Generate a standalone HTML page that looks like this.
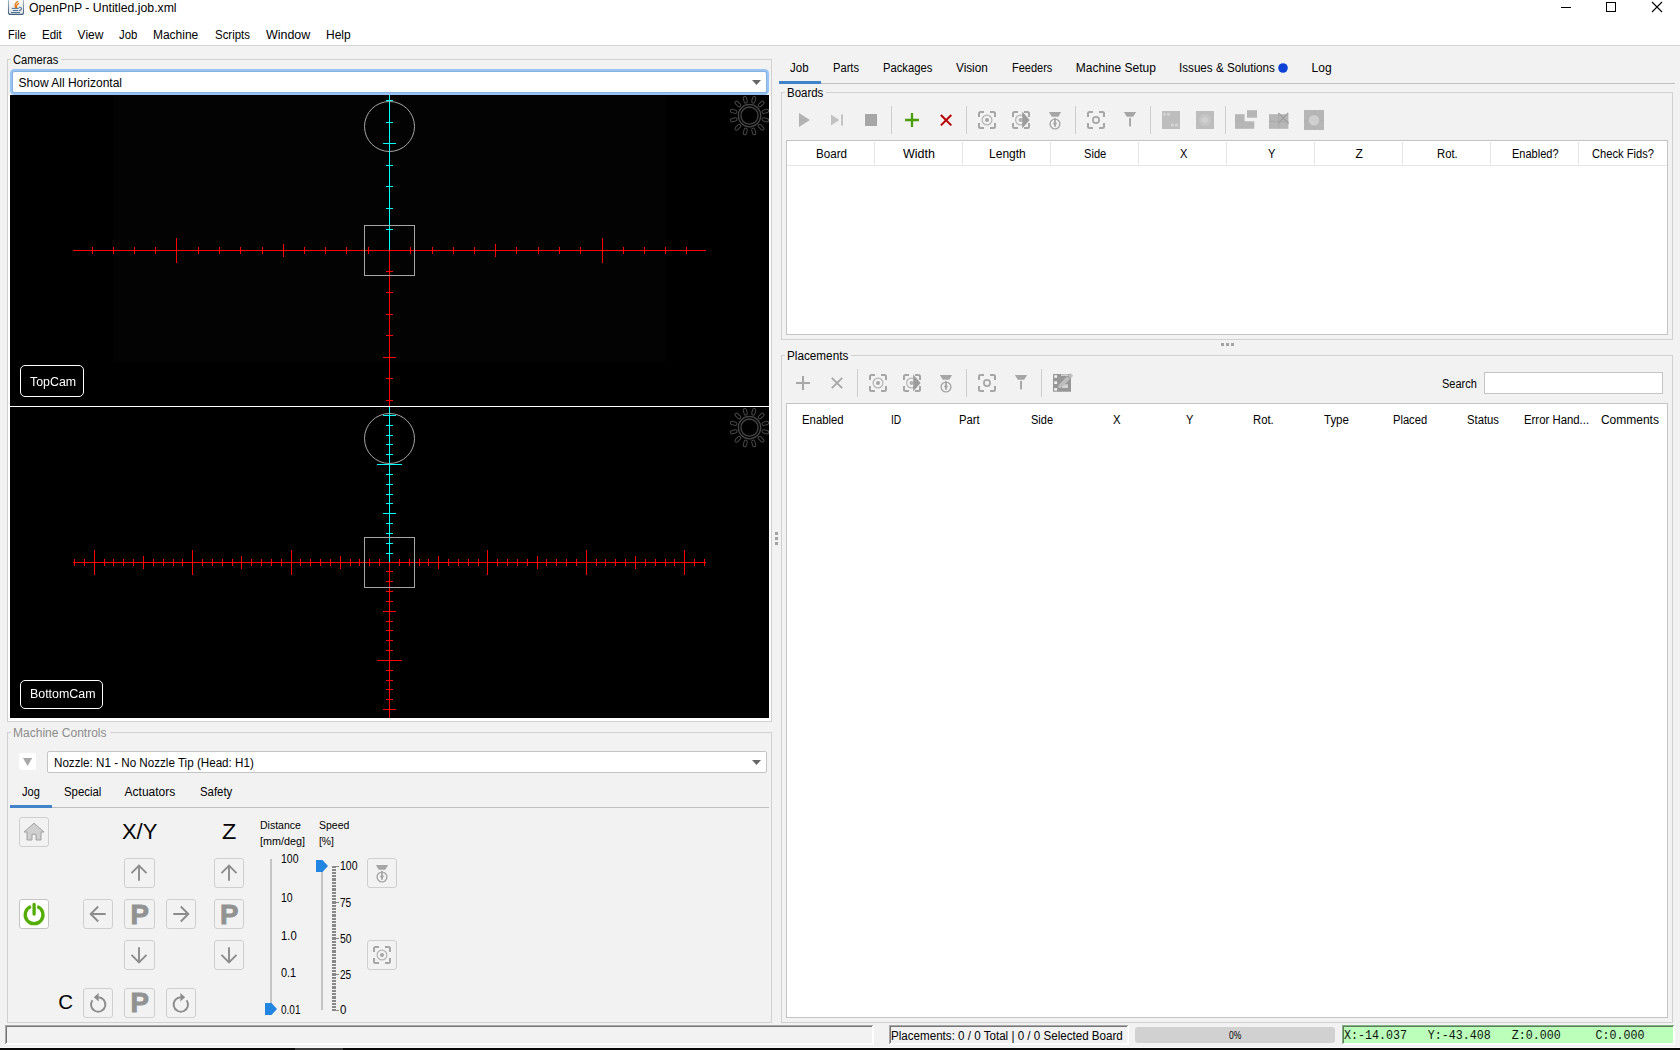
<!DOCTYPE html>
<html lang="en"><head><meta charset="utf-8"><title>OpenPnP - Untitled.job.xml</title>
<style>
html,body{margin:0;padding:0;}
body{width:1680px;height:1050px;overflow:hidden;background:#f2f2f2;position:relative;font-family:'Liberation Sans', sans-serif;}
.a{position:absolute;display:block;}
.t{position:absolute;white-space:pre;transform-origin:0 0;}
</style></head>
<body>
<div class="a" style="left:0px;top:0px;width:1680px;height:45px;background:#ffffff;"></div>
<div class="a" style="left:0px;top:45px;width:1680px;height:1px;background:#d4d4d4;"></div>
<svg class="a" style="left:7px;top:0px;" width="18" height="16" viewBox="0 0 18 16"><defs><linearGradient id="jg" x1="0" y1="0" x2="0" y2="1"><stop offset="0" stop-color="#ffffff"/><stop offset="1" stop-color="#e4e4e4"/></linearGradient><linearGradient id="js" x1="0" y1="0" x2="0" y2="1"><stop offset="0" stop-color="#b9c9da"/><stop offset="1" stop-color="#3f607f"/></linearGradient></defs>
<rect x="1.5" y="-2" width="15" height="16.4" rx="2" fill="url(#jg)" stroke="url(#js)" stroke-width="1.1"/>
<path d="M10.6 1.6C8.6 3 7.2 4.6 8.5 7.6M11.6 3.4C9.9 4.5 8.9 5.8 9.6 7.4" fill="none" stroke="#e8750a" stroke-width="1.2" stroke-linecap="round"/>
<path d="M5.2 8.4H11.4M6.2 10.5H10.6M4.4 12.5H12.6" fill="none" stroke="#4d7299" stroke-width="1" stroke-linecap="round"/>
<path d="M12.2 7.3C15.2 7.4 15.3 10.2 12.2 10.6" fill="none" stroke="#4d7299" stroke-width="1.1" stroke-linecap="round"/></svg>
<span class="t" style="left:28.60px;top:-2.16px;font:normal 12px/20px 'Liberation Sans', sans-serif;color:#000;transform:scaleX(1.0213);">OpenPnP - Untitled.job.xml</span>
<div class="a" style="left:1561px;top:7px;width:10px;height:1px;background:#000;"></div>
<div class="a" style="left:1606px;top:2px;width:10px;height:10px;border:1px solid #000;box-sizing:border-box;"></div>
<svg class="a" style="left:1651px;top:1px;" width="12" height="12" viewBox="0 0 12 12"><path d="M1 1L11 11M11 1L1 11" stroke="#000" stroke-width="1.1" fill="none"/></svg>
<span class="t" style="left:8.10px;top:24.84px;font:normal 12px/20px 'Liberation Sans', sans-serif;color:#000;transform:scaleX(0.9202);">File</span>
<span class="t" style="left:42.10px;top:24.84px;font:normal 12px/20px 'Liberation Sans', sans-serif;color:#000;transform:scaleX(0.9571);">Edit</span>
<span class="t" style="left:77.60px;top:24.84px;font:normal 12px/20px 'Liberation Sans', sans-serif;color:#000;">View</span>
<span class="t" style="left:118.60px;top:24.84px;font:normal 12px/20px 'Liberation Sans', sans-serif;color:#000;transform:scaleX(0.9453);">Job</span>
<span class="t" style="left:152.90px;top:24.84px;font:normal 12px/20px 'Liberation Sans', sans-serif;color:#000;">Machine</span>
<span class="t" style="left:214.90px;top:24.84px;font:normal 12px/20px 'Liberation Sans', sans-serif;color:#000;transform:scaleX(0.9540);">Scripts</span>
<span class="t" style="left:265.60px;top:24.84px;font:normal 12px/20px 'Liberation Sans', sans-serif;color:#000;transform:scaleX(1.0378);">Window</span>
<span class="t" style="left:326.00px;top:24.84px;font:normal 12px/20px 'Liberation Sans', sans-serif;color:#000;">Help</span>
<div class="a" style="left:7px;top:59px;width:765px;height:663px;border:1px solid #d1d1d1;box-sizing:border-box;"></div>
<div class="a" style="left:11px;top:59px;width:50px;height:1px;background:#f2f2f2;"></div>
<span class="t" style="left:13.10px;top:49.84px;font:normal 12px/20px 'Liberation Sans', sans-serif;color:#000;transform:scaleX(0.9304);">Cameras</span>
<div class="a" style="left:10px;top:69px;width:759px;height:26px;background:#98c4f5;border-radius:4.5px;"></div>
<div class="a" style="left:12px;top:71px;width:755px;height:22px;background:#86b1de;border-radius:2.5px;"></div>
<div class="a" style="left:13px;top:72px;width:753px;height:20px;background:#ffffff;border-radius:1.5px;"></div>
<span class="t" style="left:18.60px;top:72.84px;font:normal 12px/20px 'Liberation Sans', sans-serif;color:#000;">Show All Horizontal</span>
<svg class="a" style="left:752px;top:80px;" width="9" height="5" viewBox="0 0 9 5"><path d="M0 0H9L4.5 5Z" fill="#666"/></svg>
<div class="a" style="left:8px;top:95px;width:763px;height:626px;background:#fff;"></div>
<div class="a" style="left:10px;top:95px;width:759px;height:623px;background:#000;"></div>
<div class="a" style="left:114px;top:95px;width:552px;height:267px;background:#030303;"></div>
<div class="a" style="left:10px;top:406px;width:759px;height:1px;background:#fff;"></div>
<svg class="a" style="left:0px;top:0px;pointer-events:none;" width="769" height="730" viewBox="0 0 769 730"><rect x="73" y="250.0" width="633" height="1" fill="#ff0000"/><rect x="389.0" y="95" width="1" height="155.5" fill="#00ffff"/><rect x="389.0" y="250.5" width="1" height="155.5" fill="#ff0000"/><rect x="368" y="247.0" width="1" height="7.0" fill="#ff0000"/><rect x="410" y="247.0" width="1" height="7.0" fill="#ff0000"/><rect x="346" y="247.0" width="1" height="7.0" fill="#ff0000"/><rect x="432" y="247.0" width="1" height="7.0" fill="#ff0000"/><rect x="325" y="247.0" width="1" height="7.0" fill="#ff0000"/><rect x="453" y="247.0" width="1" height="7.0" fill="#ff0000"/><rect x="304" y="247.0" width="1" height="7.0" fill="#ff0000"/><rect x="474" y="247.0" width="1" height="7.0" fill="#ff0000"/><rect x="283" y="244.0" width="1" height="13.0" fill="#ff0000"/><rect x="495" y="244.0" width="1" height="13.0" fill="#ff0000"/><rect x="262" y="247.0" width="1" height="7.0" fill="#ff0000"/><rect x="516" y="247.0" width="1" height="7.0" fill="#ff0000"/><rect x="240" y="247.0" width="1" height="7.0" fill="#ff0000"/><rect x="538" y="247.0" width="1" height="7.0" fill="#ff0000"/><rect x="219" y="247.0" width="1" height="7.0" fill="#ff0000"/><rect x="559" y="247.0" width="1" height="7.0" fill="#ff0000"/><rect x="198" y="247.0" width="1" height="7.0" fill="#ff0000"/><rect x="580" y="247.0" width="1" height="7.0" fill="#ff0000"/><rect x="176" y="238.0" width="1" height="25.0" fill="#ff0000"/><rect x="602" y="238.0" width="1" height="25.0" fill="#ff0000"/><rect x="155" y="247.0" width="1" height="7.0" fill="#ff0000"/><rect x="623" y="247.0" width="1" height="7.0" fill="#ff0000"/><rect x="134" y="247.0" width="1" height="7.0" fill="#ff0000"/><rect x="644" y="247.0" width="1" height="7.0" fill="#ff0000"/><rect x="113" y="247.0" width="1" height="7.0" fill="#ff0000"/><rect x="665" y="247.0" width="1" height="7.0" fill="#ff0000"/><rect x="92" y="247.0" width="1" height="7.0" fill="#ff0000"/><rect x="686" y="247.0" width="1" height="7.0" fill="#ff0000"/><rect x="386.0" y="229" width="7.0" height="1" fill="#00ffff"/><rect x="386.0" y="208" width="7.0" height="1" fill="#00ffff"/><rect x="386.0" y="186" width="7.0" height="1" fill="#00ffff"/><rect x="386.0" y="165" width="7.0" height="1" fill="#00ffff"/><rect x="383.0" y="143" width="13.0" height="1" fill="#00ffff"/><rect x="386.0" y="122" width="7.0" height="1" fill="#00ffff"/><rect x="386.0" y="100" width="7.0" height="1" fill="#00ffff"/><rect x="386.0" y="271" width="7.0" height="1" fill="#ff0000"/><rect x="386.0" y="292" width="7.0" height="1" fill="#ff0000"/><rect x="386.0" y="314" width="7.0" height="1" fill="#ff0000"/><rect x="386.0" y="335" width="7.0" height="1" fill="#ff0000"/><rect x="383.0" y="357" width="13.0" height="1" fill="#ff0000"/><rect x="386.0" y="378" width="7.0" height="1" fill="#ff0000"/><rect x="386.0" y="400" width="7.0" height="1" fill="#ff0000"/><rect x="364.5" y="225.5" width="50" height="50" fill="none" stroke="#a6a6a6" stroke-width="1"/><circle cx="389.5" cy="126.5" r="25" fill="none" stroke="#a6a6a6" stroke-width="1"/><rect x="73" y="562.0" width="633" height="1" fill="#ff0000"/><rect x="389.0" y="407" width="1" height="155.5" fill="#00ffff"/><rect x="389.0" y="562.5" width="1" height="155.5" fill="#ff0000"/><rect x="379" y="559.0" width="1" height="7.0" fill="#ff0000"/><rect x="399" y="559.0" width="1" height="7.0" fill="#ff0000"/><rect x="369" y="559.0" width="1" height="7.0" fill="#ff0000"/><rect x="409" y="559.0" width="1" height="7.0" fill="#ff0000"/><rect x="359" y="559.0" width="1" height="7.0" fill="#ff0000"/><rect x="419" y="559.0" width="1" height="7.0" fill="#ff0000"/><rect x="350" y="559.0" width="1" height="7.0" fill="#ff0000"/><rect x="428" y="559.0" width="1" height="7.0" fill="#ff0000"/><rect x="340" y="556.0" width="1" height="13.0" fill="#ff0000"/><rect x="438" y="556.0" width="1" height="13.0" fill="#ff0000"/><rect x="330" y="559.0" width="1" height="7.0" fill="#ff0000"/><rect x="448" y="559.0" width="1" height="7.0" fill="#ff0000"/><rect x="320" y="559.0" width="1" height="7.0" fill="#ff0000"/><rect x="458" y="559.0" width="1" height="7.0" fill="#ff0000"/><rect x="310" y="559.0" width="1" height="7.0" fill="#ff0000"/><rect x="468" y="559.0" width="1" height="7.0" fill="#ff0000"/><rect x="300" y="559.0" width="1" height="7.0" fill="#ff0000"/><rect x="478" y="559.0" width="1" height="7.0" fill="#ff0000"/><rect x="291" y="550.0" width="1" height="25.0" fill="#ff0000"/><rect x="487" y="550.0" width="1" height="25.0" fill="#ff0000"/><rect x="281" y="559.0" width="1" height="7.0" fill="#ff0000"/><rect x="497" y="559.0" width="1" height="7.0" fill="#ff0000"/><rect x="271" y="559.0" width="1" height="7.0" fill="#ff0000"/><rect x="507" y="559.0" width="1" height="7.0" fill="#ff0000"/><rect x="261" y="559.0" width="1" height="7.0" fill="#ff0000"/><rect x="517" y="559.0" width="1" height="7.0" fill="#ff0000"/><rect x="251" y="559.0" width="1" height="7.0" fill="#ff0000"/><rect x="527" y="559.0" width="1" height="7.0" fill="#ff0000"/><rect x="241" y="556.0" width="1" height="13.0" fill="#ff0000"/><rect x="537" y="556.0" width="1" height="13.0" fill="#ff0000"/><rect x="232" y="559.0" width="1" height="7.0" fill="#ff0000"/><rect x="546" y="559.0" width="1" height="7.0" fill="#ff0000"/><rect x="222" y="559.0" width="1" height="7.0" fill="#ff0000"/><rect x="556" y="559.0" width="1" height="7.0" fill="#ff0000"/><rect x="212" y="559.0" width="1" height="7.0" fill="#ff0000"/><rect x="566" y="559.0" width="1" height="7.0" fill="#ff0000"/><rect x="202" y="559.0" width="1" height="7.0" fill="#ff0000"/><rect x="576" y="559.0" width="1" height="7.0" fill="#ff0000"/><rect x="192" y="550.0" width="1" height="25.0" fill="#ff0000"/><rect x="586" y="550.0" width="1" height="25.0" fill="#ff0000"/><rect x="182" y="559.0" width="1" height="7.0" fill="#ff0000"/><rect x="596" y="559.0" width="1" height="7.0" fill="#ff0000"/><rect x="173" y="559.0" width="1" height="7.0" fill="#ff0000"/><rect x="605" y="559.0" width="1" height="7.0" fill="#ff0000"/><rect x="163" y="559.0" width="1" height="7.0" fill="#ff0000"/><rect x="615" y="559.0" width="1" height="7.0" fill="#ff0000"/><rect x="153" y="559.0" width="1" height="7.0" fill="#ff0000"/><rect x="625" y="559.0" width="1" height="7.0" fill="#ff0000"/><rect x="143" y="556.0" width="1" height="13.0" fill="#ff0000"/><rect x="635" y="556.0" width="1" height="13.0" fill="#ff0000"/><rect x="133" y="559.0" width="1" height="7.0" fill="#ff0000"/><rect x="645" y="559.0" width="1" height="7.0" fill="#ff0000"/><rect x="123" y="559.0" width="1" height="7.0" fill="#ff0000"/><rect x="655" y="559.0" width="1" height="7.0" fill="#ff0000"/><rect x="113" y="559.0" width="1" height="7.0" fill="#ff0000"/><rect x="665" y="559.0" width="1" height="7.0" fill="#ff0000"/><rect x="104" y="559.0" width="1" height="7.0" fill="#ff0000"/><rect x="674" y="559.0" width="1" height="7.0" fill="#ff0000"/><rect x="94" y="550.0" width="1" height="25.0" fill="#ff0000"/><rect x="684" y="550.0" width="1" height="25.0" fill="#ff0000"/><rect x="84" y="559.0" width="1" height="7.0" fill="#ff0000"/><rect x="694" y="559.0" width="1" height="7.0" fill="#ff0000"/><rect x="74" y="559.0" width="1" height="7.0" fill="#ff0000"/><rect x="704" y="559.0" width="1" height="7.0" fill="#ff0000"/><rect x="386.0" y="553" width="7.0" height="1" fill="#00ffff"/><rect x="386.0" y="543" width="7.0" height="1" fill="#00ffff"/><rect x="386.0" y="533" width="7.0" height="1" fill="#00ffff"/><rect x="386.0" y="523" width="7.0" height="1" fill="#00ffff"/><rect x="383.0" y="513" width="13.0" height="1" fill="#00ffff"/><rect x="386.0" y="503" width="7.0" height="1" fill="#00ffff"/><rect x="386.0" y="494" width="7.0" height="1" fill="#00ffff"/><rect x="386.0" y="484" width="7.0" height="1" fill="#00ffff"/><rect x="386.0" y="474" width="7.0" height="1" fill="#00ffff"/><rect x="377.0" y="464" width="25.0" height="1" fill="#00ffff"/><rect x="386.0" y="454" width="7.0" height="1" fill="#00ffff"/><rect x="386.0" y="444" width="7.0" height="1" fill="#00ffff"/><rect x="386.0" y="435" width="7.0" height="1" fill="#00ffff"/><rect x="386.0" y="425" width="7.0" height="1" fill="#00ffff"/><rect x="383.0" y="415" width="13.0" height="1" fill="#00ffff"/><rect x="386.0" y="571" width="7.0" height="1" fill="#ff0000"/><rect x="386.0" y="581" width="7.0" height="1" fill="#ff0000"/><rect x="386.0" y="591" width="7.0" height="1" fill="#ff0000"/><rect x="386.0" y="601" width="7.0" height="1" fill="#ff0000"/><rect x="383.0" y="611" width="13.0" height="1" fill="#ff0000"/><rect x="386.0" y="621" width="7.0" height="1" fill="#ff0000"/><rect x="386.0" y="630" width="7.0" height="1" fill="#ff0000"/><rect x="386.0" y="640" width="7.0" height="1" fill="#ff0000"/><rect x="386.0" y="650" width="7.0" height="1" fill="#ff0000"/><rect x="377.0" y="660" width="25.0" height="1" fill="#ff0000"/><rect x="386.0" y="670" width="7.0" height="1" fill="#ff0000"/><rect x="386.0" y="680" width="7.0" height="1" fill="#ff0000"/><rect x="386.0" y="689" width="7.0" height="1" fill="#ff0000"/><rect x="386.0" y="699" width="7.0" height="1" fill="#ff0000"/><rect x="383.0" y="709" width="13.0" height="1" fill="#ff0000"/><rect x="364.5" y="537.5" width="50" height="50" fill="none" stroke="#a6a6a6" stroke-width="1"/><circle cx="389.5" cy="438.5" r="25" fill="none" stroke="#a6a6a6" stroke-width="1"/><circle cx="749.5" cy="115.6" r="11.2" fill="none" stroke="#474747" stroke-width="1.3"/><circle cx="749.5" cy="115.6" r="8.6" fill="none" stroke="#474747" stroke-width="1.3"/><rect x="-3.4" y="-1.6" width="6.8" height="3.2" rx="1.6" fill="none" stroke="#474747" stroke-width="1" transform="translate(765.34 119.84) rotate(15)"/><rect x="-3.4" y="-1.6" width="6.8" height="3.2" rx="1.6" fill="none" stroke="#474747" stroke-width="1" transform="translate(761.10 127.20) rotate(45)"/><rect x="-3.4" y="-1.6" width="6.8" height="3.2" rx="1.6" fill="none" stroke="#474747" stroke-width="1" transform="translate(753.74 131.44) rotate(75)"/><rect x="-3.4" y="-1.6" width="6.8" height="3.2" rx="1.6" fill="none" stroke="#474747" stroke-width="1" transform="translate(745.26 131.44) rotate(105)"/><rect x="-3.4" y="-1.6" width="6.8" height="3.2" rx="1.6" fill="none" stroke="#474747" stroke-width="1" transform="translate(737.90 127.20) rotate(135)"/><rect x="-3.4" y="-1.6" width="6.8" height="3.2" rx="1.6" fill="none" stroke="#474747" stroke-width="1" transform="translate(733.66 119.84) rotate(165)"/><rect x="-3.4" y="-1.6" width="6.8" height="3.2" rx="1.6" fill="none" stroke="#474747" stroke-width="1" transform="translate(733.66 111.36) rotate(195)"/><rect x="-3.4" y="-1.6" width="6.8" height="3.2" rx="1.6" fill="none" stroke="#474747" stroke-width="1" transform="translate(737.90 104.00) rotate(225)"/><rect x="-3.4" y="-1.6" width="6.8" height="3.2" rx="1.6" fill="none" stroke="#474747" stroke-width="1" transform="translate(745.26 99.76) rotate(255)"/><rect x="-3.4" y="-1.6" width="6.8" height="3.2" rx="1.6" fill="none" stroke="#474747" stroke-width="1" transform="translate(753.74 99.76) rotate(285)"/><rect x="-3.4" y="-1.6" width="6.8" height="3.2" rx="1.6" fill="none" stroke="#474747" stroke-width="1" transform="translate(761.10 104.00) rotate(315)"/><rect x="-3.4" y="-1.6" width="6.8" height="3.2" rx="1.6" fill="none" stroke="#474747" stroke-width="1" transform="translate(765.34 111.36) rotate(345)"/><circle cx="749.5" cy="427.6" r="11.2" fill="none" stroke="#474747" stroke-width="1.3"/><circle cx="749.5" cy="427.6" r="8.6" fill="none" stroke="#474747" stroke-width="1.3"/><rect x="-3.4" y="-1.6" width="6.8" height="3.2" rx="1.6" fill="none" stroke="#474747" stroke-width="1" transform="translate(765.34 431.84) rotate(15)"/><rect x="-3.4" y="-1.6" width="6.8" height="3.2" rx="1.6" fill="none" stroke="#474747" stroke-width="1" transform="translate(761.10 439.20) rotate(45)"/><rect x="-3.4" y="-1.6" width="6.8" height="3.2" rx="1.6" fill="none" stroke="#474747" stroke-width="1" transform="translate(753.74 443.44) rotate(75)"/><rect x="-3.4" y="-1.6" width="6.8" height="3.2" rx="1.6" fill="none" stroke="#474747" stroke-width="1" transform="translate(745.26 443.44) rotate(105)"/><rect x="-3.4" y="-1.6" width="6.8" height="3.2" rx="1.6" fill="none" stroke="#474747" stroke-width="1" transform="translate(737.90 439.20) rotate(135)"/><rect x="-3.4" y="-1.6" width="6.8" height="3.2" rx="1.6" fill="none" stroke="#474747" stroke-width="1" transform="translate(733.66 431.84) rotate(165)"/><rect x="-3.4" y="-1.6" width="6.8" height="3.2" rx="1.6" fill="none" stroke="#474747" stroke-width="1" transform="translate(733.66 423.36) rotate(195)"/><rect x="-3.4" y="-1.6" width="6.8" height="3.2" rx="1.6" fill="none" stroke="#474747" stroke-width="1" transform="translate(737.90 416.00) rotate(225)"/><rect x="-3.4" y="-1.6" width="6.8" height="3.2" rx="1.6" fill="none" stroke="#474747" stroke-width="1" transform="translate(745.26 411.76) rotate(255)"/><rect x="-3.4" y="-1.6" width="6.8" height="3.2" rx="1.6" fill="none" stroke="#474747" stroke-width="1" transform="translate(753.74 411.76) rotate(285)"/><rect x="-3.4" y="-1.6" width="6.8" height="3.2" rx="1.6" fill="none" stroke="#474747" stroke-width="1" transform="translate(761.10 416.00) rotate(315)"/><rect x="-3.4" y="-1.6" width="6.8" height="3.2" rx="1.6" fill="none" stroke="#474747" stroke-width="1" transform="translate(765.34 423.36) rotate(345)"/></svg>
<div class="a" style="left:20px;top:365px;width:64px;height:32px;border:1px solid #fff;box-sizing:border-box;border-radius:5px;"></div>
<span class="t" style="left:29.60px;top:371.64px;font:normal 12px/20px 'Liberation Sans', sans-serif;color:#fff;transform:scaleX(1.0316);will-change:transform;">TopCam</span>
<div class="a" style="left:20px;top:680px;width:83px;height:29px;border:1px solid #fff;box-sizing:border-box;border-radius:5px;"></div>
<span class="t" style="left:29.90px;top:683.84px;font:normal 12px/20px 'Liberation Sans', sans-serif;color:#fff;transform:scaleX(1.0338);will-change:transform;">BottomCam</span>
<div class="a" style="left:7px;top:732px;width:765px;height:291px;border:1px solid #d1d1d1;box-sizing:border-box;"></div>
<div class="a" style="left:11px;top:732px;width:99px;height:1px;background:#f2f2f2;"></div>
<span class="t" style="left:13.10px;top:723.04px;font:normal 12px/20px 'Liberation Sans', sans-serif;color:#8c8c8c;">Machine Controls</span>
<div class="a" style="left:19px;top:753px;width:17px;height:17px;background:#fff;border-radius:3px;"></div>
<svg class="a" style="left:22.9px;top:758px;" width="9.2" height="8" viewBox="0 0 9.2 8"><path d="M0 0H9.2L4.6 8Z" fill="#a8a8a8"/></svg>
<div class="a" style="left:47px;top:751px;width:720px;height:22px;background:#fff;border:1px solid #c4c4c4;box-sizing:border-box;border-radius:2px;"></div>
<span class="t" style="left:53.60px;top:752.84px;font:normal 12px/20px 'Liberation Sans', sans-serif;color:#000;transform:scaleX(0.9695);">Nozzle: N1 - No Nozzle Tip (Head: H1)</span>
<svg class="a" style="left:752px;top:760px;" width="9" height="5" viewBox="0 0 9 5"><path d="M0 0H9L4.5 5Z" fill="#666"/></svg>
<span class="t" style="left:21.60px;top:781.84px;font:normal 12px/20px 'Liberation Sans', sans-serif;color:#000;transform:scaleX(0.9195);">Jog</span>
<span class="t" style="left:63.60px;top:781.84px;font:normal 12px/20px 'Liberation Sans', sans-serif;color:#000;transform:scaleX(0.9477);">Special</span>
<span class="t" style="left:124.60px;top:781.84px;font:normal 12px/20px 'Liberation Sans', sans-serif;color:#000;">Actuators</span>
<span class="t" style="left:199.60px;top:781.84px;font:normal 12px/20px 'Liberation Sans', sans-serif;color:#000;transform:scaleX(0.9491);">Safety</span>
<div class="a" style="left:10px;top:807px;width:759px;height:1px;background:#bfbfbf;"></div>
<div class="a" style="left:10px;top:805px;width:42px;height:3px;background:#4083c9;"></div>
<div class="a" style="left:19px;top:817px;width:30px;height:30px;background:#f2f2f2;border:1px solid #cfcfcf;box-sizing:border-box;border-radius:3px;"></div>
<svg class="a" style="left:22px;top:820px;" width="24" height="24" viewBox="0 0 24 24"><path d="M12 3.2L2 12H5V20H10V14.3H14V20H19V12H22Z" fill="#cfcfcf" stroke="#a0a0a0" stroke-width="1" stroke-linejoin="round"/></svg>
<div class="a" style="left:19px;top:899px;width:30px;height:30px;background:#fff;border:1px solid #c4c4c4;box-sizing:border-box;border-radius:3px;"></div>
<svg class="a" style="left:22px;top:902px;" width="24" height="24" viewBox="0 0 24 24"><path d="M8.9 4.5A8.9 8.9 0 1 0 15.3 4.5" fill="none" stroke="#53ad02" stroke-width="3.3"/><path d="M12.1 2.4V12.1" stroke="#53ad02" stroke-width="3.3" stroke-linecap="round"/></svg>
<span class="t" style="left:121.90px;top:822.13px;font:normal 22px/20px 'Liberation Sans', sans-serif;color:#000;">X/Y</span>
<span class="t" style="left:221.60px;top:822.13px;font:normal 22px/20px 'Liberation Sans', sans-serif;color:#000;transform:scaleX(1.0630);">Z</span>
<span class="t" style="left:58.20px;top:992.10px;font:normal 20.5px/20px 'Liberation Sans', sans-serif;color:#000;">C</span>
<div class="a" style="left:124px;top:858px;width:31px;height:30px;background:#f2f2f2;border:1px solid #cfcfcf;box-sizing:border-box;border-radius:3px;"></div>
<svg class="a" style="left:127px;top:861px;" width="24" height="24" viewBox="0 0 24 24"><g transform="rotate(0 12 12)"><path d="M12 19.7V5M4.5 12.2L12 4.7L19.5 12.2" fill="none" stroke="#8c8c8c" stroke-width="1.9"/></g></svg>
<div class="a" style="left:83px;top:899px;width:30px;height:30px;background:#f2f2f2;border:1px solid #cfcfcf;box-sizing:border-box;border-radius:3px;"></div>
<svg class="a" style="left:86px;top:902px;" width="24" height="24" viewBox="0 0 24 24"><g transform="rotate(-90 12 12)"><path d="M12 19.7V5M4.5 12.2L12 4.7L19.5 12.2" fill="none" stroke="#8c8c8c" stroke-width="1.9"/></g></svg>
<div class="a" style="left:124px;top:899px;width:31px;height:30px;background:#f2f2f2;border:1px solid #cfcfcf;box-sizing:border-box;border-radius:3px;"></div>
<span class="t" style="left:130.50px;top:904.54px;font:bold 27.6px/20px 'Liberation Sans', sans-serif;color:#929292;-webkit-text-stroke:0.9px #929292;">P</span>
<div class="a" style="left:166px;top:899px;width:30px;height:30px;background:#f2f2f2;border:1px solid #cfcfcf;box-sizing:border-box;border-radius:3px;"></div>
<svg class="a" style="left:169px;top:902px;" width="24" height="24" viewBox="0 0 24 24"><g transform="rotate(90 12 12)"><path d="M12 19.7V5M4.5 12.2L12 4.7L19.5 12.2" fill="none" stroke="#8c8c8c" stroke-width="1.9"/></g></svg>
<div class="a" style="left:124px;top:940px;width:31px;height:30px;background:#f2f2f2;border:1px solid #cfcfcf;box-sizing:border-box;border-radius:3px;"></div>
<svg class="a" style="left:127px;top:943px;" width="24" height="24" viewBox="0 0 24 24"><g transform="rotate(180 12 12)"><path d="M12 19.7V5M4.5 12.2L12 4.7L19.5 12.2" fill="none" stroke="#8c8c8c" stroke-width="1.9"/></g></svg>
<div class="a" style="left:214px;top:858px;width:30px;height:30px;background:#f2f2f2;border:1px solid #cfcfcf;box-sizing:border-box;border-radius:3px;"></div>
<svg class="a" style="left:217px;top:861px;" width="24" height="24" viewBox="0 0 24 24"><g transform="rotate(0 12 12)"><path d="M12 19.7V5M4.5 12.2L12 4.7L19.5 12.2" fill="none" stroke="#8c8c8c" stroke-width="1.9"/></g></svg>
<div class="a" style="left:214px;top:899px;width:30px;height:30px;background:#f2f2f2;border:1px solid #cfcfcf;box-sizing:border-box;border-radius:3px;"></div>
<span class="t" style="left:220.00px;top:904.54px;font:bold 27.6px/20px 'Liberation Sans', sans-serif;color:#929292;-webkit-text-stroke:0.9px #929292;">P</span>
<div class="a" style="left:214px;top:940px;width:30px;height:30px;background:#f2f2f2;border:1px solid #cfcfcf;box-sizing:border-box;border-radius:3px;"></div>
<svg class="a" style="left:217px;top:943px;" width="24" height="24" viewBox="0 0 24 24"><g transform="rotate(180 12 12)"><path d="M12 19.7V5M4.5 12.2L12 4.7L19.5 12.2" fill="none" stroke="#8c8c8c" stroke-width="1.9"/></g></svg>
<div class="a" style="left:83px;top:988px;width:30px;height:30px;background:#f2f2f2;border:1px solid #cfcfcf;box-sizing:border-box;border-radius:3px;"></div>
<svg class="a" style="left:86px;top:991.6px;" width="24" height="24" viewBox="0 0 24 24"><g transform="translate(24 0) scale(-1 1)"><path d="M17.6 8.2A7.2 7.2 0 1 1 11.5 5.3" fill="none" stroke="#8c8c8c" stroke-width="1.9"/><path d="M11.3 1L16.2 5.3L11.3 9.6Z" fill="#8c8c8c"/></g></svg>
<div class="a" style="left:124px;top:988px;width:31px;height:30px;background:#f2f2f2;border:1px solid #cfcfcf;box-sizing:border-box;border-radius:3px;"></div>
<span class="t" style="left:130.50px;top:993.34px;font:bold 27.6px/20px 'Liberation Sans', sans-serif;color:#929292;-webkit-text-stroke:0.9px #929292;">P</span>
<div class="a" style="left:166px;top:988px;width:30px;height:30px;background:#f2f2f2;border:1px solid #cfcfcf;box-sizing:border-box;border-radius:3px;"></div>
<svg class="a" style="left:169px;top:991.6px;" width="24" height="24" viewBox="0 0 24 24"><g ><path d="M17.6 8.2A7.2 7.2 0 1 1 11.5 5.3" fill="none" stroke="#8c8c8c" stroke-width="1.9"/><path d="M11.3 1L16.2 5.3L11.3 9.6Z" fill="#8c8c8c"/></g></svg>
<span class="t" style="left:259.90px;top:815.53px;font:normal 10px/20px 'Liberation Sans', sans-serif;color:#000;transform:scaleX(1.0512);">Distance</span>
<span class="t" style="left:259.90px;top:831.53px;font:normal 10px/20px 'Liberation Sans', sans-serif;color:#000;transform:scaleX(1.0795);">[mm/deg]</span>
<span class="t" style="left:319.00px;top:815.53px;font:normal 10px/20px 'Liberation Sans', sans-serif;color:#000;transform:scaleX(1.0476);">Speed</span>
<span class="t" style="left:319.00px;top:831.53px;font:normal 10px/20px 'Liberation Sans', sans-serif;color:#000;transform:scaleX(1.0309);">[%]</span>
<div class="a" style="left:270px;top:859px;width:2px;height:151px;background:#c4c4c4;"></div>
<svg class="a" style="left:265px;top:1003px;" width="12" height="12" viewBox="0 0 12 12"><path d="M0 0H6.5L12 6L6.5 12H0Z" fill="#2285e1"/></svg>
<span class="t" style="left:281.20px;top:849.44px;font:normal 12px/20px 'Liberation Sans', sans-serif;color:#000;transform:scaleX(0.8736);">100</span>
<span class="t" style="left:281.20px;top:887.54px;font:normal 12px/20px 'Liberation Sans', sans-serif;color:#000;transform:scaleX(0.8758);">10</span>
<span class="t" style="left:281.20px;top:925.54px;font:normal 12px/20px 'Liberation Sans', sans-serif;color:#000;transform:scaleX(0.9408);">1.0</span>
<span class="t" style="left:281.20px;top:962.64px;font:normal 12px/20px 'Liberation Sans', sans-serif;color:#000;transform:scaleX(0.9109);">0.1</span>
<span class="t" style="left:281.20px;top:1000.04px;font:normal 12px/20px 'Liberation Sans', sans-serif;color:#000;transform:scaleX(0.8348);">0.01</span>
<div class="a" style="left:321px;top:866px;width:2px;height:144px;background:#c4c4c4;"></div>
<svg class="a" style="left:316px;top:860px;" width="12" height="12" viewBox="0 0 12 12"><path d="M0 0H6.5L12 6L6.5 12H0Z" fill="#2285e1"/></svg>
<svg class="a" style="left:332px;top:866px;" width="8" height="146" viewBox="0 0 8 146"><rect x="0" y="0" width="4" height="2" fill="#888"/><rect x="0" y="3" width="4" height="2" fill="#888"/><rect x="0" y="6" width="4" height="2" fill="#888"/><rect x="0" y="9" width="4" height="2" fill="#888"/><rect x="0" y="12" width="4" height="3" fill="#888"/><rect x="0" y="16" width="4" height="2" fill="#888"/><rect x="0" y="19" width="4" height="2" fill="#888"/><rect x="0" y="22" width="4" height="3" fill="#888"/><rect x="0" y="26" width="4" height="2" fill="#888"/><rect x="0" y="29" width="4" height="2" fill="#888"/><rect x="0" y="32" width="4" height="2" fill="#888"/><rect x="0" y="35" width="4" height="3" fill="#888"/><rect x="0" y="39" width="4" height="2" fill="#888"/><rect x="0" y="42" width="4" height="2" fill="#888"/><rect x="0" y="45" width="4" height="2" fill="#888"/><rect x="0" y="48" width="4" height="3" fill="#888"/><rect x="0" y="52" width="4" height="2" fill="#888"/><rect x="0" y="55" width="4" height="2" fill="#888"/><rect x="0" y="58" width="4" height="3" fill="#888"/><rect x="0" y="62" width="4" height="2" fill="#888"/><rect x="0" y="65" width="4" height="2" fill="#888"/><rect x="0" y="68" width="4" height="2" fill="#888"/><rect x="0" y="71" width="4" height="3" fill="#888"/><rect x="0" y="75" width="4" height="2" fill="#888"/><rect x="0" y="78" width="4" height="2" fill="#888"/><rect x="0" y="81" width="4" height="2" fill="#888"/><rect x="0" y="84" width="4" height="3" fill="#888"/><rect x="0" y="88" width="4" height="2" fill="#888"/><rect x="0" y="91" width="4" height="2" fill="#888"/><rect x="0" y="94" width="4" height="3" fill="#888"/><rect x="0" y="98" width="4" height="2" fill="#888"/><rect x="0" y="101" width="4" height="2" fill="#888"/><rect x="0" y="104" width="4" height="2" fill="#888"/><rect x="0" y="107" width="4" height="3" fill="#888"/><rect x="0" y="111" width="4" height="2" fill="#888"/><rect x="0" y="114" width="4" height="2" fill="#888"/><rect x="0" y="117" width="4" height="2" fill="#888"/><rect x="0" y="120" width="4" height="3" fill="#888"/><rect x="0" y="124" width="4" height="2" fill="#888"/><rect x="0" y="127" width="4" height="2" fill="#888"/><rect x="0" y="130" width="4" height="3" fill="#888"/><rect x="0" y="134" width="4" height="2" fill="#888"/><rect x="0" y="137" width="4" height="2" fill="#888"/><rect x="0" y="140" width="4" height="2" fill="#888"/><rect x="0" y="143" width="4" height="2" fill="#888"/><rect x="0" y="0" width="7" height="1" fill="#888"/><rect x="0" y="36" width="7" height="1" fill="#888"/><rect x="0" y="72" width="7" height="1" fill="#888"/><rect x="0" y="108" width="7" height="1" fill="#888"/><rect x="0" y="144" width="7" height="1" fill="#888"/></svg>
<span class="t" style="left:340.20px;top:856.44px;font:normal 12px/20px 'Liberation Sans', sans-serif;color:#000;transform:scaleX(0.8736);">100</span>
<span class="t" style="left:340.20px;top:892.54px;font:normal 12px/20px 'Liberation Sans', sans-serif;color:#000;transform:scaleX(0.8384);">75</span>
<span class="t" style="left:340.20px;top:928.54px;font:normal 12px/20px 'Liberation Sans', sans-serif;color:#000;transform:scaleX(0.8608);">50</span>
<span class="t" style="left:340.20px;top:964.54px;font:normal 12px/20px 'Liberation Sans', sans-serif;color:#000;transform:scaleX(0.8384);">25</span>
<span class="t" style="left:340.20px;top:999.64px;font:normal 12px/20px 'Liberation Sans', sans-serif;color:#000;transform:scaleX(0.9570);">0</span>
<div class="a" style="left:367px;top:858px;width:30px;height:30px;background:#f2f2f2;border:1px solid #cfcfcf;box-sizing:border-box;border-radius:3px;"></div>
<div class="a" style="left:367px;top:940px;width:30px;height:30px;background:#f2f2f2;border:1px solid #cfcfcf;box-sizing:border-box;border-radius:3px;"></div>
<span class="t" style="left:790.10px;top:57.84px;font:normal 12px/20px 'Liberation Sans', sans-serif;color:#000;transform:scaleX(0.9582);">Job</span>
<span class="t" style="left:832.60px;top:57.84px;font:normal 12px/20px 'Liberation Sans', sans-serif;color:#000;transform:scaleX(0.9298);">Parts</span>
<span class="t" style="left:882.60px;top:57.84px;font:normal 12px/20px 'Liberation Sans', sans-serif;color:#000;transform:scaleX(0.9354);">Packages</span>
<span class="t" style="left:955.60px;top:57.84px;font:normal 12px/20px 'Liberation Sans', sans-serif;color:#000;transform:scaleX(0.9794);">Vision</span>
<span class="t" style="left:1011.60px;top:57.84px;font:normal 12px/20px 'Liberation Sans', sans-serif;color:#000;transform:scaleX(0.9153);">Feeders</span>
<span class="t" style="left:1075.85px;top:57.84px;font:normal 12px/20px 'Liberation Sans', sans-serif;color:#000;">Machine Setup</span>
<span class="t" style="left:1178.60px;top:57.84px;font:normal 12px/20px 'Liberation Sans', sans-serif;color:#000;transform:scaleX(0.9704);">Issues &amp; Solutions</span>
<span class="t" style="left:1311.60px;top:57.84px;font:normal 12px/20px 'Liberation Sans', sans-serif;color:#000;">Log</span>
<svg class="a" style="left:1278.4px;top:63px;" width="10" height="10" viewBox="0 0 10 10"><circle cx="5" cy="5" r="4.8" fill="#0c43d6"/></svg>
<div class="a" style="left:779px;top:83px;width:896px;height:1px;background:#bfbfbf;"></div>
<div class="a" style="left:779px;top:81px;width:42px;height:3px;background:#4083c9;"></div>
<div class="a" style="left:781px;top:92px;width:892px;height:248px;border:1px solid #d1d1d1;box-sizing:border-box;"></div>
<div class="a" style="left:785px;top:92px;width:41px;height:1px;background:#f2f2f2;"></div>
<span class="t" style="left:786.60px;top:82.84px;font:normal 12px/20px 'Liberation Sans', sans-serif;color:#000;transform:scaleX(0.9545);">Boards</span>
<div class="a" style="left:786px;top:140px;width:882px;height:195px;background:#fff;border:1px solid #c4c4c4;box-sizing:border-box;"></div>
<div class="a" style="left:787px;top:165px;width:880px;height:1px;background:#e5e5e5;"></div>
<div class="a" style="left:874px;top:142px;width:1px;height:22px;background:#e5e5e5;"></div>
<div class="a" style="left:962px;top:142px;width:1px;height:22px;background:#e5e5e5;"></div>
<div class="a" style="left:1050px;top:142px;width:1px;height:22px;background:#e5e5e5;"></div>
<div class="a" style="left:1138px;top:142px;width:1px;height:22px;background:#e5e5e5;"></div>
<div class="a" style="left:1226px;top:142px;width:1px;height:22px;background:#e5e5e5;"></div>
<div class="a" style="left:1314px;top:142px;width:1px;height:22px;background:#e5e5e5;"></div>
<div class="a" style="left:1402px;top:142px;width:1px;height:22px;background:#e5e5e5;"></div>
<div class="a" style="left:1490px;top:142px;width:1px;height:22px;background:#e5e5e5;"></div>
<div class="a" style="left:1578px;top:142px;width:1px;height:22px;background:#e5e5e5;"></div>
<span class="t" style="left:815.70px;top:143.84px;font:normal 12px/20px 'Liberation Sans', sans-serif;color:#000;transform:scaleX(0.9678);">Board</span>
<span class="t" style="left:902.70px;top:143.84px;font:normal 12px/20px 'Liberation Sans', sans-serif;color:#000;transform:scaleX(1.0428);">Width</span>
<span class="t" style="left:989.10px;top:143.84px;font:normal 12px/20px 'Liberation Sans', sans-serif;color:#000;">Length</span>
<span class="t" style="left:1083.60px;top:143.84px;font:normal 12px/20px 'Liberation Sans', sans-serif;color:#000;transform:scaleX(0.9280);">Side</span>
<span class="t" style="left:1179.80px;top:143.84px;font:normal 12px/20px 'Liberation Sans', sans-serif;color:#000;transform:scaleX(0.9232);">X</span>
<span class="t" style="left:1267.90px;top:143.84px;font:normal 12px/20px 'Liberation Sans', sans-serif;color:#000;transform:scaleX(0.9232);">Y</span>
<span class="t" style="left:1355.60px;top:143.84px;font:normal 12px/20px 'Liberation Sans', sans-serif;color:#000;">Z</span>
<span class="t" style="left:1437.00px;top:143.84px;font:normal 12px/20px 'Liberation Sans', sans-serif;color:#000;transform:scaleX(0.9402);">Rot.</span>
<span class="t" style="left:1512.30px;top:143.84px;font:normal 12px/20px 'Liberation Sans', sans-serif;color:#000;transform:scaleX(0.9188);">Enabled?</span>
<span class="t" style="left:1592.10px;top:143.84px;font:normal 12px/20px 'Liberation Sans', sans-serif;color:#000;transform:scaleX(0.9280);">Check Fids?</span>
<div class="a" style="left:1221px;top:343px;width:3px;height:3px;background:#a3a3a3;"></div>
<div class="a" style="left:775px;top:532px;width:3px;height:3px;background:#a3a3a3;"></div>
<div class="a" style="left:1226px;top:343px;width:3px;height:3px;background:#a3a3a3;"></div>
<div class="a" style="left:775px;top:537px;width:3px;height:3px;background:#a3a3a3;"></div>
<div class="a" style="left:1231px;top:343px;width:3px;height:3px;background:#a3a3a3;"></div>
<div class="a" style="left:775px;top:542px;width:3px;height:3px;background:#a3a3a3;"></div>
<div class="a" style="left:781px;top:355px;width:892px;height:668px;border:1px solid #d1d1d1;box-sizing:border-box;"></div>
<div class="a" style="left:785px;top:355px;width:66px;height:1px;background:#f2f2f2;"></div>
<span class="t" style="left:786.60px;top:345.84px;font:normal 12px/20px 'Liberation Sans', sans-serif;color:#000;transform:scaleX(0.9776);">Placements</span>
<span class="t" style="left:1441.60px;top:373.84px;font:normal 12px/20px 'Liberation Sans', sans-serif;color:#000;transform:scaleX(0.9150);">Search</span>
<div class="a" style="left:1484px;top:372px;width:179px;height:22px;background:#fff;border:1px solid #c4c4c4;box-sizing:border-box;"></div>
<div class="a" style="left:786px;top:403px;width:882px;height:615px;background:#fff;border:1px solid #c4c4c4;box-sizing:border-box;"></div>
<span class="t" style="left:801.80px;top:410.04px;font:normal 12px/20px 'Liberation Sans', sans-serif;color:#000;transform:scaleX(0.9467);">Enabled</span>
<span class="t" style="left:890.90px;top:410.04px;font:normal 12px/20px 'Liberation Sans', sans-serif;color:#000;transform:scaleX(0.8500);">ID</span>
<span class="t" style="left:959.00px;top:410.04px;font:normal 12px/20px 'Liberation Sans', sans-serif;color:#000;transform:scaleX(0.9402);">Part</span>
<span class="t" style="left:1031.00px;top:410.04px;font:normal 12px/20px 'Liberation Sans', sans-serif;color:#000;transform:scaleX(0.9196);">Side</span>
<span class="t" style="left:1112.50px;top:410.04px;font:normal 12px/20px 'Liberation Sans', sans-serif;color:#000;transform:scaleX(0.9481);">X</span>
<span class="t" style="left:1185.80px;top:410.04px;font:normal 12px/20px 'Liberation Sans', sans-serif;color:#000;transform:scaleX(0.9232);">Y</span>
<span class="t" style="left:1252.80px;top:410.04px;font:normal 12px/20px 'Liberation Sans', sans-serif;color:#000;transform:scaleX(0.9402);">Rot.</span>
<span class="t" style="left:1323.90px;top:410.04px;font:normal 12px/20px 'Liberation Sans', sans-serif;color:#000;transform:scaleX(0.9571);">Type</span>
<span class="t" style="left:1393.40px;top:410.04px;font:normal 12px/20px 'Liberation Sans', sans-serif;color:#000;transform:scaleX(0.9291);">Placed</span>
<span class="t" style="left:1466.60px;top:410.04px;font:normal 12px/20px 'Liberation Sans', sans-serif;color:#000;transform:scaleX(0.9403);">Status</span>
<span class="t" style="left:1524.20px;top:410.04px;font:normal 12px/20px 'Liberation Sans', sans-serif;color:#000;transform:scaleX(0.9476);">Error Hand...</span>
<span class="t" style="left:1600.90px;top:410.04px;font:normal 12px/20px 'Liberation Sans', sans-serif;color:#000;">Comments</span>
<div class="a" style="left:6px;top:1043px;width:868px;height:2px;background:#ffffff;"></div>
<div class="a" style="left:872px;top:1026px;width:2px;height:19px;background:#ffffff;"></div>
<div class="a" style="left:5px;top:1025px;width:868px;height:1px;background:#a9a9a9;"></div>
<div class="a" style="left:5px;top:1025px;width:1px;height:19px;background:#a9a9a9;"></div>
<div class="a" style="left:6px;top:1026px;width:866px;height:1px;background:#767676;"></div>
<div class="a" style="left:6px;top:1026px;width:1px;height:17px;background:#767676;"></div>
<div class="a" style="left:890px;top:1043px;width:239px;height:2px;background:#ffffff;"></div>
<div class="a" style="left:1127px;top:1026px;width:2px;height:19px;background:#ffffff;"></div>
<div class="a" style="left:889px;top:1025px;width:239px;height:1px;background:#a9a9a9;"></div>
<div class="a" style="left:889px;top:1025px;width:1px;height:19px;background:#a9a9a9;"></div>
<div class="a" style="left:890px;top:1026px;width:237px;height:1px;background:#767676;"></div>
<div class="a" style="left:890px;top:1026px;width:1px;height:17px;background:#767676;"></div>
<span class="t" style="left:890.60px;top:1025.84px;font:normal 12px/20px 'Liberation Sans', sans-serif;color:#000;transform:scaleX(0.9670);">Placements: 0 / 0 Total | 0 / 0 Selected Board</span>
<div class="a" style="left:1135px;top:1027px;width:200px;height:16px;background:#d1d1d1;border-radius:3px;"></div>
<span class="t" style="left:1228.60px;top:1025.54px;font:normal 10px/20px 'Liberation Sans', sans-serif;color:#000;transform:scaleX(0.8510);">0%</span>
<div class="a" style="left:1344px;top:1027px;width:329px;height:16px;background:#bbffbb;"></div>
<div class="a" style="left:1343px;top:1043px;width:332px;height:2px;background:#ffffff;"></div>
<div class="a" style="left:1673px;top:1026px;width:2px;height:19px;background:#ffffff;"></div>
<div class="a" style="left:1342px;top:1025px;width:332px;height:1px;background:#83b283;"></div>
<div class="a" style="left:1342px;top:1025px;width:1px;height:19px;background:#83b283;"></div>
<div class="a" style="left:1343px;top:1026px;width:330px;height:1px;background:#5c7d5c;"></div>
<div class="a" style="left:1343px;top:1026px;width:1px;height:17px;background:#5c7d5c;"></div>
<span class="t" style="left:1343.80px;top:1026.40px;font:normal 13.5px/20px 'Liberation Mono', monospace;color:#111;transform:scaleX(0.8626);">X:-14.037   Y:-43.408   Z:0.000     C:0.000</span>
<div class="a" style="left:0px;top:1047px;width:1680px;height:1px;background:#fbfbfb;"></div>
<div class="a" style="left:0px;top:1048px;width:1680px;height:2px;background:#0a0a0a;"></div>
<div class="a" style="left:295px;top:1048px;width:48px;height:2px;background:#3a3a3a;"></div>
<svg class="a" style="left:798px;top:113px;" width="12" height="14" viewBox="0 0 12 14"><path d="M1 0L12 7L1 14Z" fill="#b2b2b2"/></svg>
<svg class="a" style="left:830px;top:114px;" width="14" height="12" viewBox="0 0 14 12"><path d="M1 0.4L9.4 6L1 11.6Z" fill="#c2c2c2"/><rect x="11.1" y="0.4" width="1.9" height="11.2" fill="#c2c2c2"/></svg>
<div class="a" style="left:865px;top:114px;width:12px;height:12px;background:#a6a6a6;"></div>
<div class="a" style="left:891px;top:106px;width:1px;height:28px;background:#cdcdcd;"></div>
<svg class="a" style="left:904px;top:112px;" width="16" height="16" viewBox="0 0 16 16"><path d="M8 1.1V14.9M1.1 8H14.9" stroke="#4c9e06" stroke-width="2.3" fill="none"/></svg>
<svg class="a" style="left:938px;top:112px;" width="16" height="16" viewBox="0 0 16 16"><path d="M2.9 3L13.3 13.4M13.3 3L2.9 13.4" stroke="#b90000" stroke-width="2" fill="none"/></svg>
<div class="a" style="left:966px;top:106px;width:1px;height:28px;background:#cdcdcd;"></div>
<svg class="a" style="left:975px;top:108px;" width="24" height="24" viewBox="0 0 24 24"><path d="M4 9V5.5Q4 4 5.5 4H9M15 4H18.5Q20 4 20 5.5V9M20 15V18.5Q20 20 18.5 20H15M9 20H5.5Q4 20 4 18.5V15" fill="none" stroke="#a6a6a6" stroke-width="2"/><circle cx="12" cy="12" r="4.9" fill="none" stroke="#b4b4b4" stroke-width="1.2"/><circle cx="12" cy="12" r="2" fill="#a6a6a6"/></svg>
<svg class="a" style="left:1009px;top:108px;" width="24" height="24" viewBox="0 0 24 24"><path d="M4 9V5.5Q4 4 5.5 4H9M15 4H18.5Q20 4 20 5.5V9M20 15V18.5Q20 20 18.5 20H15M9 20H5.5Q4 20 4 18.5V15" fill="none" stroke="#a6a6a6" stroke-width="2"/><circle cx="11.5" cy="12" r="4.9" fill="none" stroke="#b4b4b4" stroke-width="1.2"/><circle cx="11.5" cy="12" r="2" fill="#b0b0b0"/><path d="M13.2 3.4L20.6 12L13.2 20.4Z" fill="#9c9c9c"/></svg>
<svg class="a" style="left:1043px;top:108px;" width="24" height="24" viewBox="0 0 24 24"><path d="M5.9 4.1H18.1L15.3 8.8H8.7Z" fill="#a6a6a6"/><circle cx="12" cy="16" r="4.9" fill="none" stroke="#a6a6a6" stroke-width="1.4"/><path d="M12 10.1V18.7" stroke="#a6a6a6" stroke-width="1.8"/><ellipse cx="12" cy="15.6" rx="1.75" ry="1.45" fill="#a6a6a6"/></svg>
<div class="a" style="left:1075px;top:106px;width:1px;height:28px;background:#cdcdcd;"></div>
<svg class="a" style="left:1084px;top:108px;" width="24" height="24" viewBox="0 0 24 24"><path d="M4 9V5.5Q4 4 5.5 4H9M15 4H18.5Q20 4 20 5.5V9M20 15V18.5Q20 20 18.5 20H15M9 20H5.5Q4 20 4 18.5V15" fill="none" stroke="#a6a6a6" stroke-width="2"/><circle cx="12" cy="12" r="3.1" fill="none" stroke="#a6a6a6" stroke-width="1.7"/></svg>
<svg class="a" style="left:1118px;top:108px;" width="24" height="24" viewBox="0 0 24 24"><path d="M5.9 4H18.1L15.2 8.8H8.8Z" fill="#a6a6a6"/><rect x="11.1" y="9.8" width="1.9" height="8.6" fill="#a6a6a6"/></svg>
<div class="a" style="left:1150px;top:106px;width:1px;height:28px;background:#cdcdcd;"></div>
<svg class="a" style="left:1162px;top:111px;" width="18" height="18" viewBox="0 0 18 18"><rect width="18" height="18" fill="#bdbdbd"/><rect x="1.2" y="1.9" width="2.6" height="2.9" fill="#d2d2d2"/><rect x="5" y="1.9" width="3.2" height="2.9" fill="#d2d2d2"/><rect x="8.9" y="12.7" width="3.1" height="2.8" fill="#d2d2d2"/><rect x="13" y="12.7" width="3.2" height="2.8" fill="#d2d2d2"/></svg>
<svg class="a" style="left:1196px;top:111px;" width="18" height="18" viewBox="0 0 18 18"><rect width="18" height="18" fill="#bdbdbd"/><circle cx="9" cy="9" r="6" fill="#c6c6c6"/><circle cx="9" cy="9" r="3" fill="#d0d0d0"/></svg>
<div class="a" style="left:1225px;top:106px;width:1px;height:28px;background:#cdcdcd;"></div>
<svg class="a" style="left:1235px;top:110px;" width="23" height="19" viewBox="0 0 23 19"><rect x="0" y="4.2" width="9.6" height="14.6" fill="#b6b6b6"/><rect x="9.6" y="11.3" width="9.7" height="7.5" fill="#b6b6b6"/><rect x="12" y="0.2" width="10" height="7.5" fill="#b6b6b6"/><path d="M0 11.4H9.6M9.4 11.4V18.8" stroke="#acacac" stroke-width=".6"/></svg>
<svg class="a" style="left:1269px;top:110px;" width="21" height="19" viewBox="0 0 21 19"><rect x="0" y="4.2" width="19.4" height="14.6" fill="#b6b6b6"/><path d="M0 11.4H19.4M9.6 4.2V18.8" stroke="#a8a8a8" stroke-width=".7"/><path d="M9.4 3L19.6 13.4M19.2 3L9.6 13" stroke="#a0a0a0" stroke-width="1.4"/></svg>
<svg class="a" style="left:1304px;top:110px;" width="20" height="20" viewBox="0 0 20 20"><rect width="20" height="20" fill="#b6b6b6"/><path d="M0 10.3H20M10 0V20" stroke="#adadad" stroke-width=".8"/><circle cx="10" cy="10.2" r="5.2" fill="#cfcfcf"/></svg>
<svg class="a" style="left:795px;top:375px;" width="16" height="16" viewBox="0 0 16 16"><path d="M8 1V15M1 8H15" stroke="#a8a8a8" stroke-width="2.1" fill="none"/></svg>
<svg class="a" style="left:829px;top:375px;" width="16" height="16" viewBox="0 0 16 16"><path d="M2.8 2.8L13.2 13.2M13.2 2.8L2.8 13.2" stroke="#a8a8a8" stroke-width="1.9" fill="none"/></svg>
<div class="a" style="left:857px;top:369px;width:1px;height:28px;background:#cdcdcd;"></div>
<svg class="a" style="left:866px;top:371px;" width="24" height="24" viewBox="0 0 24 24"><path d="M4 9V5.5Q4 4 5.5 4H9M15 4H18.5Q20 4 20 5.5V9M20 15V18.5Q20 20 18.5 20H15M9 20H5.5Q4 20 4 18.5V15" fill="none" stroke="#a6a6a6" stroke-width="2"/><circle cx="12" cy="12" r="4.9" fill="none" stroke="#b4b4b4" stroke-width="1.2"/><circle cx="12" cy="12" r="2" fill="#a6a6a6"/></svg>
<svg class="a" style="left:900px;top:371px;" width="24" height="24" viewBox="0 0 24 24"><path d="M4 9V5.5Q4 4 5.5 4H9M15 4H18.5Q20 4 20 5.5V9M20 15V18.5Q20 20 18.5 20H15M9 20H5.5Q4 20 4 18.5V15" fill="none" stroke="#a6a6a6" stroke-width="2"/><circle cx="11.5" cy="12" r="4.9" fill="none" stroke="#b4b4b4" stroke-width="1.2"/><circle cx="11.5" cy="12" r="2" fill="#b0b0b0"/><path d="M13.2 3.4L20.6 12L13.2 20.4Z" fill="#9c9c9c"/></svg>
<svg class="a" style="left:934px;top:371px;" width="24" height="24" viewBox="0 0 24 24"><path d="M5.9 4.1H18.1L15.3 8.8H8.7Z" fill="#a6a6a6"/><circle cx="12" cy="16" r="4.9" fill="none" stroke="#a6a6a6" stroke-width="1.4"/><path d="M12 10.1V18.7" stroke="#a6a6a6" stroke-width="1.8"/><ellipse cx="12" cy="15.6" rx="1.75" ry="1.45" fill="#a6a6a6"/></svg>
<div class="a" style="left:966px;top:369px;width:1px;height:28px;background:#cdcdcd;"></div>
<svg class="a" style="left:975px;top:371px;" width="24" height="24" viewBox="0 0 24 24"><path d="M4 9V5.5Q4 4 5.5 4H9M15 4H18.5Q20 4 20 5.5V9M20 15V18.5Q20 20 18.5 20H15M9 20H5.5Q4 20 4 18.5V15" fill="none" stroke="#a6a6a6" stroke-width="2"/><circle cx="12" cy="12" r="3.1" fill="none" stroke="#a6a6a6" stroke-width="1.7"/></svg>
<svg class="a" style="left:1009px;top:371px;" width="24" height="24" viewBox="0 0 24 24"><path d="M5.9 4H18.1L15.2 8.8H8.8Z" fill="#a6a6a6"/><rect x="11.1" y="9.8" width="1.9" height="8.6" fill="#a6a6a6"/></svg>
<div class="a" style="left:1041px;top:369px;width:1px;height:28px;background:#cdcdcd;"></div>
<svg class="a" style="left:1053px;top:372px;" width="21" height="20" viewBox="0 0 21 20"><rect x="0" y="2.1" width="18" height="17.7" rx=".6" fill="#979797"/><rect x="1.2" y="3.2" width="2.9" height="2.6" fill="#f0f0f0"/><rect x="1.2" y="9.3" width="2.9" height="2.7" fill="#f0f0f0"/><rect x="1.2" y="16" width="2.9" height="2.7" fill="#f0f0f0"/><rect x="8" y="2.3" width="7" height="1.7" fill="#cfcfcf"/><rect x="9" y="12.3" width="6" height="3.7" fill="#d2d2d2"/><path d="M5.3 16V13.3L14.3 4.3L17 7L8 16Z" fill="#bdbdbd"/><path d="M15 3.4L17.4 1L20.2 3.8L17.8 6.2Z" fill="#c0c0c0"/></svg>
<svg class="a" style="left:370px;top:861px;" width="24" height="24" viewBox="0 0 24 24"><path d="M5.9 4.1H18.1L15.3 8.8H8.7Z" fill="#a6a6a6"/><circle cx="12" cy="16" r="4.9" fill="none" stroke="#a6a6a6" stroke-width="1.4"/><path d="M12 10.1V18.7" stroke="#a6a6a6" stroke-width="1.8"/><ellipse cx="12" cy="15.6" rx="1.75" ry="1.45" fill="#a6a6a6"/></svg>
<svg class="a" style="left:370px;top:943px;" width="24" height="24" viewBox="0 0 24 24"><path d="M4 9V5.5Q4 4 5.5 4H9M15 4H18.5Q20 4 20 5.5V9M20 15V18.5Q20 20 18.5 20H15M9 20H5.5Q4 20 4 18.5V15" fill="none" stroke="#a6a6a6" stroke-width="2"/><circle cx="12" cy="12" r="4.9" fill="none" stroke="#b4b4b4" stroke-width="1.2"/><circle cx="12" cy="12" r="2" fill="#a6a6a6"/></svg>
</body></html>
